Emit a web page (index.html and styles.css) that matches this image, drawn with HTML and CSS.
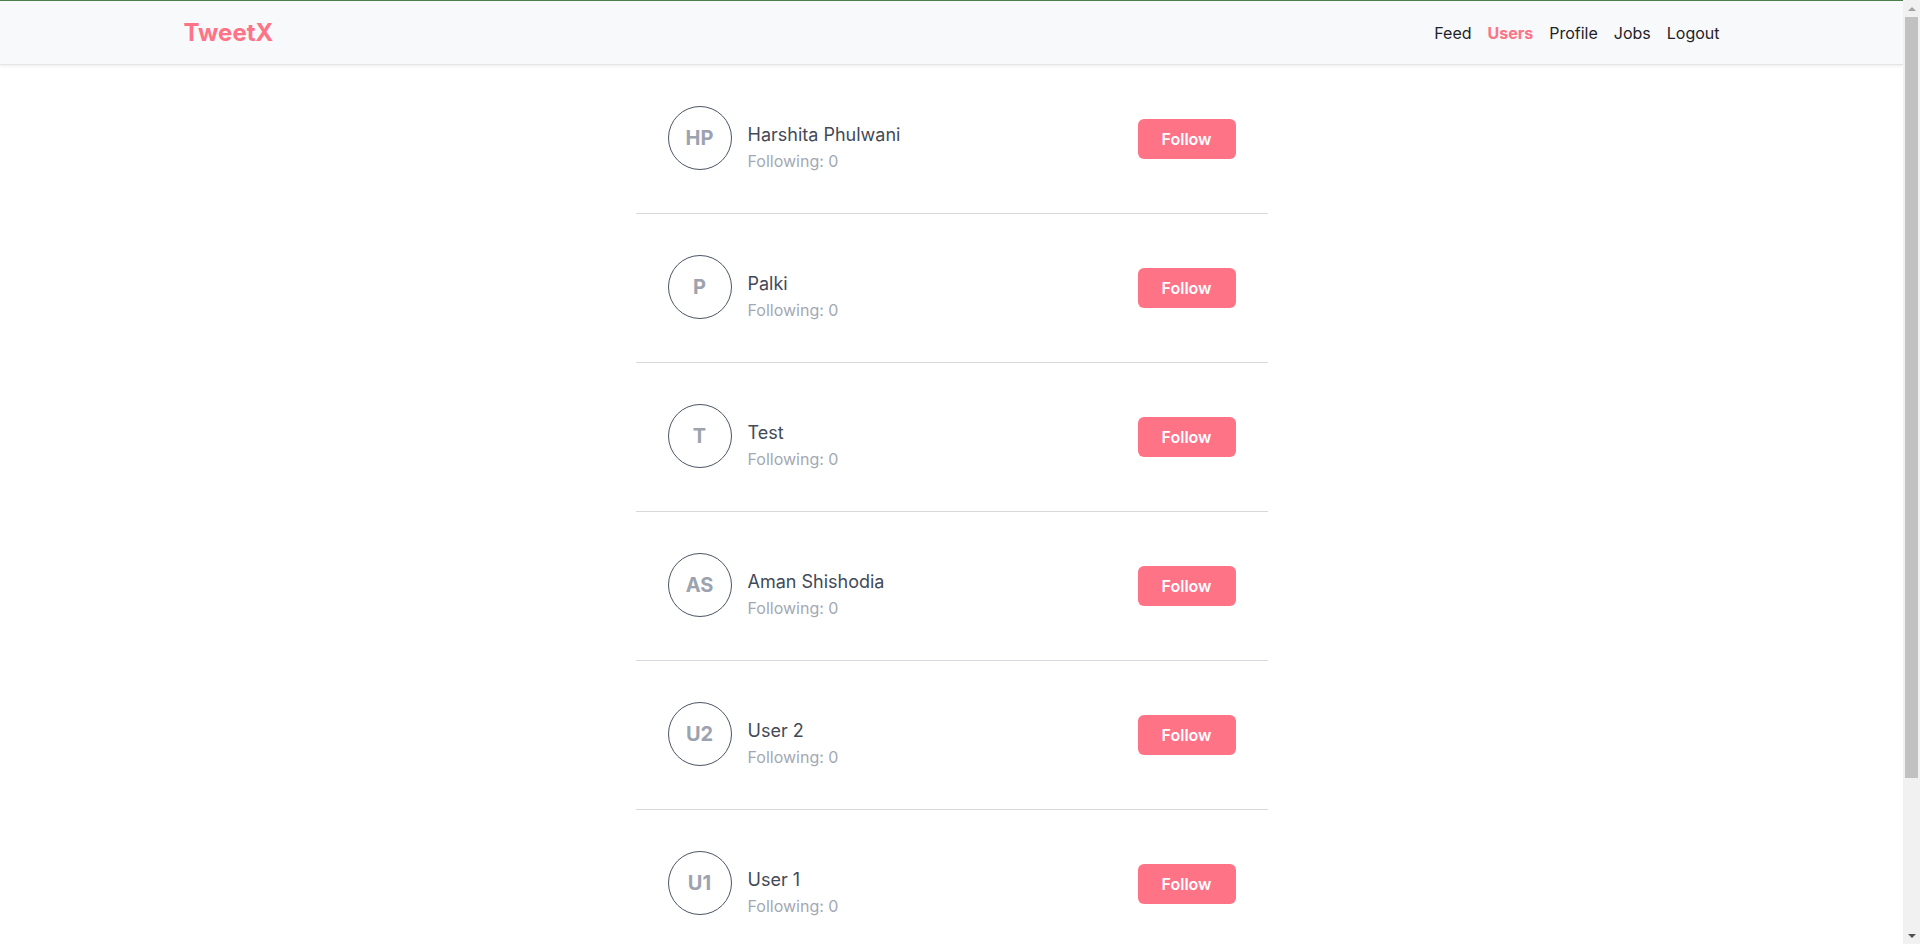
FILE: index.html
```html
<!DOCTYPE html>
<html lang="en">
<head>
<meta charset="utf-8">
<title>TweetX - Users</title>
<link rel="stylesheet" href="styles.css">
</head>
<body>
<header class="navbar">
  <div class="nav-container">
    <a class="brand" href="#">TweetX</a>
    <nav class="nav-links">
      <a class="nav-link" href="#">Feed</a>
      <a class="nav-link active" href="#">Users</a>
      <a class="nav-link" href="#">Profile</a>
      <a class="nav-link" href="#">Jobs</a>
      <a class="nav-link" href="#">Logout</a>
    </nav>
  </div>
</header>
<main class="main">
  <ul class="user-list">
    <li class="user-row">
      <div class="user-info">
        <div class="avatar">HP</div>
        <div class="user-text">
          <div class="user-name">Harshita Phulwani</div>
          <div class="user-following">Following: 0</div>
        </div>
      </div>
      <button class="follow-btn">Follow</button>
    </li>
    <li class="user-row">
      <div class="user-info">
        <div class="avatar">P</div>
        <div class="user-text">
          <div class="user-name">Palki</div>
          <div class="user-following">Following: 0</div>
        </div>
      </div>
      <button class="follow-btn">Follow</button>
    </li>
    <li class="user-row">
      <div class="user-info">
        <div class="avatar">T</div>
        <div class="user-text">
          <div class="user-name">Test</div>
          <div class="user-following">Following: 0</div>
        </div>
      </div>
      <button class="follow-btn">Follow</button>
    </li>
    <li class="user-row">
      <div class="user-info">
        <div class="avatar">AS</div>
        <div class="user-text">
          <div class="user-name">Aman Shishodia</div>
          <div class="user-following">Following: 0</div>
        </div>
      </div>
      <button class="follow-btn">Follow</button>
    </li>
    <li class="user-row">
      <div class="user-info">
        <div class="avatar">U2</div>
        <div class="user-text">
          <div class="user-name">User 2</div>
          <div class="user-following">Following: 0</div>
        </div>
      </div>
      <button class="follow-btn">Follow</button>
    </li>
    <li class="user-row">
      <div class="user-info">
        <div class="avatar">U1</div>
        <div class="user-text">
          <div class="user-name">User 1</div>
          <div class="user-following">Following: 0</div>
        </div>
      </div>
      <button class="follow-btn">Follow</button>
    </li>
    <li class="user-row">
      <div class="user-info">
        <div class="avatar">U0</div>
        <div class="user-text">
          <div class="user-name">User 0</div>
          <div class="user-following">Following: 0</div>
        </div>
      </div>
      <button class="follow-btn">Follow</button>
    </li>
  </ul>
</main>
<div class="fake-scrollbar" aria-hidden="true">
  <div class="sb-button"><span class="sb-arrow-up"></span></div>
  <div class="sb-track"><div class="sb-thumb"></div></div>
  <div class="sb-button"><span class="sb-arrow-down"></span></div>
</div>
</body>
</html>
```
FILE: styles.css
```css
* {
  box-sizing: border-box;
}

html, body {
  margin: 0;
  padding: 0;
}

::-webkit-scrollbar {
  display: none;
  width: 0;
}

body {
  font-family: Inter, "Noto Sans", sans-serif;
  background: #ffffff;
  color: #374151;
  margin-right: 17px;
}

.fake-scrollbar {
  position: fixed;
  top: 0;
  right: 0;
  width: 17px;
  height: 100vh;
  background: #f1f1f1;
  display: flex;
  flex-direction: column;
  z-index: 10;
}

.sb-button {
  height: 17px;
  flex-shrink: 0;
  display: flex;
  align-items: center;
  justify-content: center;
}

.sb-arrow-up {
  width: 0;
  height: 0;
  border-left: 4px solid transparent;
  border-right: 4px solid transparent;
  border-bottom: 4px solid #a3a3a3;
}

.sb-arrow-down {
  width: 0;
  height: 0;
  border-left: 4px solid transparent;
  border-right: 4px solid transparent;
  border-top: 4px solid #505050;
}

.sb-track {
  flex: 1;
  padding: 0 2px;
}

.sb-thumb {
  height: 761px;
  background: #c1c1c1;
}

.navbar {
  height: 65px;
  background: #f8f9fa;
  border-top: 1px solid #4c7f4c;
  border-bottom: 1px solid #e3e5e8;
  box-shadow: 0 1px 3px rgba(0, 0, 0, 0.08);
  position: relative;
  z-index: 1;
}

.nav-container {
  max-width: 1536px;
  height: 100%;
  margin: 0 auto;
  display: flex;
  align-items: center;
  justify-content: space-between;
}

.brand {
  font-family: Inter, sans-serif;
  font-weight: 700;
  font-size: 24px;
  color: #ff7387;
  text-decoration: none;
  line-height: 32px;
}

.nav-links {
  display: flex;
  gap: 16px;
}

.nav-link {
  font-size: 16px;
  line-height: 24px;
  color: #1f2328;
  text-decoration: none;
}

.nav-link.active {
  color: #ff7387;
  font-weight: 700;
}

.main {
  padding-bottom: 22px;
}

.user-list {
  list-style: none;
  margin: 0 auto;
  padding: 0;
  width: 632px;
}

.user-row {
  display: flex;
  align-items: center;
  justify-content: space-between;
  padding: 40px 32px;
  min-height: 149px;
  border-bottom: 1px solid #d6d8dc;
}

.user-info {
  display: flex;
  align-items: flex-start;
  gap: 16px;
}

.avatar {
  width: 64px;
  height: 64px;
  border-radius: 50%;
  border: 1px solid #4b5563;
  display: flex;
  align-items: center;
  justify-content: center;
  font-size: 20px;
  font-weight: 700;
  color: #9ca3af;
  flex-shrink: 0;
}

.user-text {
  margin-top: 15px;
}

.user-name {
  font-size: 18px;
  line-height: 28px;
  color: #424a58;
}

.user-following {
  font-size: 16px;
  line-height: 24px;
  color: #a3a8b4;
}

.follow-btn {
  font-family: Inter, sans-serif;
  font-size: 16px;
  font-weight: 600;
  line-height: 24px;
  color: #ffffff;
  background: #ff7387;
  border: none;
  border-radius: 6px;
  padding: 8px 24px;
  cursor: pointer;
}
```
